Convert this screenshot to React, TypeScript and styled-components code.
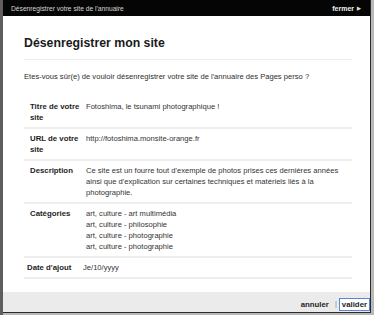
import React from "react";
import styled, { createGlobalStyle } from "styled-components";

const Global = createGlobalStyle`
  html, body { margin: 0; padding: 0; }
  body {
    background: #7d7d7d;
    font-family: "Liberation Sans", Arial, sans-serif;
    color: #333;
  }
`;

const Backdrop = styled.div`
  width: 374px;
  height: 315px;
  display: flex;
  background: linear-gradient(90deg, #5e5e5e 0 3px, #b9b9b9 3px);
  overflow: hidden;
`;

const Dialog = styled.div`
  margin-left: 3px;
  width: 367px;
  height: 312px;
  background: #fff;
  border-right: 1px solid #2a2a2a;
  border-bottom: 1px solid #2a2a2a;
  display: flex;
  flex-direction: column;
`;

const Header = styled.div`
  height: 16px;
  flex: none;
  background: #050505;
  display: flex;
  align-items: center;
  justify-content: space-between;
  padding: 0 9px 0 8px;
`;

const HeaderTitle = styled.span`
  color: #d6d6d6;
  font-size: 6.7px;
`;

const Close = styled.span`
  color: #f2f2f2;
  font-size: 7px;
  font-weight: bold;
  display: flex;
  align-items: center;
  gap: 3px;
`;

const Arrow = styled.span`
  font-size: 5px;
  color: #ddd;
`;

const Content = styled.div`
  flex: 1;
  padding: 0 18px 0 21px;
`;

const Title = styled.h1`
  margin: 19px 0 0;
  padding-bottom: 8px;
  border-bottom: 1px solid #ececec;
  font-size: 12.3px;
  line-height: 16px;
  font-weight: bold;
  color: #1a1a1a;
`;

const Question = styled.p`
  margin: 11px 0 0;
  font-size: 7.6px;
  line-height: 11px;
  color: #2e2e2e;
`;

const Table = styled.div`
  margin-top: 15px;
  display: flex;
  flex-direction: column;
`;

const Row = styled.div<{ $inset?: number }>`
  display: grid;
  grid-template-columns: 56px 1fr;
  padding: 4px 0 4px ${(p) => p.$inset ?? 6}px;
  border-bottom: 2px solid #eeeeee;
  font-size: 7.6px;
  line-height: 11px;
`;

const Label = styled.div`
  font-weight: bold;
  font-size: 7.8px;
  color: #1e1e1e;
`;

const Value = styled.div`
  color: #333;
`;

const Footer = styled.div`
  height: 20px;
  flex: none;
  background: #ebebeb;
  display: flex;
  align-items: flex-end;
  justify-content: flex-end;
  padding-bottom: 1px;
  box-sizing: border-box;
`;

const LinkButton = styled.span<{ $boxed?: boolean }>`
  font-size: 7.8px;
  font-weight: bold;
  color: #1e1e1e;
  height: 13px;
  line-height: 12px;
  padding: 0 2px;
  box-sizing: border-box;
  ${(p) =>
    p.$boxed
      ? `background:#fff;border:1px solid #5a86d8;`
      : `border:1px solid transparent;`}
`;

const Divider = styled.span`
  color: #888;
  font-size: 7.5px;
  line-height: 12px;
  height: 13px;
  margin: 0 2px 0 3px;
`;

const rows: { label: React.ReactNode; value: React.ReactNode; inset?: number }[] = [
  {
    label: (
      <>
        Titre de votre
        <br />
        site
      </>
    ),
    value: "Fotoshima, le tsunami photographique !",
  },
  {
    label: (
      <>
        URL de votre
        <br />
        site
      </>
    ),
    value: "http://fotoshima.monsite-orange.fr",
  },
  {
    label: "Description",
    value: (
      <>
        Ce site est un fourre tout d'exemple de photos prises ces dernières années
        <br />
        ainsi que d'explication sur certaines techniques et matériels liés à la
        <br />
        photographie.
      </>
    ),
  },
  {
    label: "Catégories",
    value: (
      <>
        art, culture - art multimédia
        <br />
        art, culture - philosophie
        <br />
        art, culture - photographie
        <br />
        art, culture - photographie
      </>
    ),
  },
  { label: "Date d'ajout", value: "Je/10/yyyy", inset: 3 },
];

export default function App() {
  return (
    <>
      <Global />
      <Backdrop>
        <Dialog>
          <Header>
            <HeaderTitle>Désenregistrer votre site de l'annuaire</HeaderTitle>
            <Close>
              fermer <Arrow>▶</Arrow>
            </Close>
          </Header>
          <Content>
            <Title>Désenregistrer mon site</Title>
            <Question>
              Etes-vous sûr(e) de vouloir désenregistrer votre site de l'annuaire des Pages perso ?
            </Question>
            <Table>
              {rows.map((r, i) => (
                <Row key={i} $inset={r.inset}>
                  <Label>{r.label}</Label>
                  <Value>{r.value}</Value>
                </Row>
              ))}
            </Table>
          </Content>
          <Footer>
            <LinkButton>annuler</LinkButton>
            <Divider>|</Divider>
            <LinkButton $boxed>valider</LinkButton>
          </Footer>
        </Dialog>
      </Backdrop>
    </>
  );
}
